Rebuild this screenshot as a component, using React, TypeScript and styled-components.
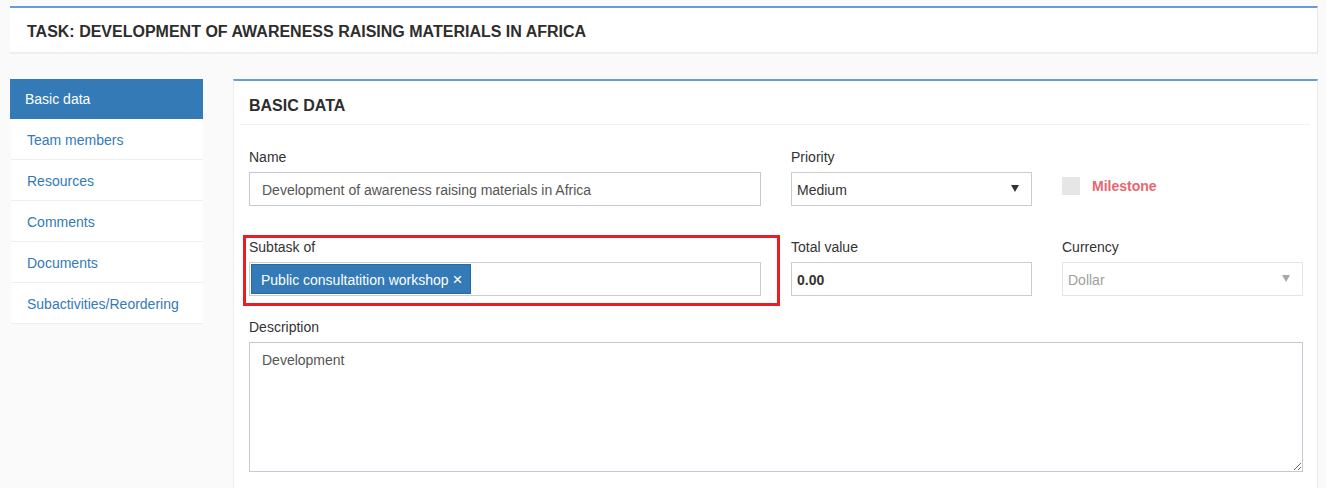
import React from 'react';
import styled, { createGlobalStyle } from 'styled-components';

const GlobalStyle = createGlobalStyle`
  * {
    box-sizing: border-box;
  }
  body {
    margin: 0;
    background: #fafafa;
    font-family: 'Liberation Sans', Arial, sans-serif;
    font-size: 14px;
    color: #333;
  }
`;

const Page = styled.div`
  padding: 6px 8px 0 10px;
`;

const Header = styled.div`
  height: 48px;
  background: #fff;
  border-top: 2px solid #659be0;
  border-right: 1px solid #e6e8eb;
  border-bottom: 2px solid #eceef1;
  display: flex;
  align-items: center;
  padding: 4px 0 0 17px;
`;

const Title = styled.h1`
  margin: 0;
  font-size: 16px;
  font-weight: bold;
  color: #2d2d2d;
`;

const Body = styled.div`
  margin-top: 25px;
  display: flex;
  gap: 30px;
  align-items: flex-start;
`;

const Sidebar = styled.ul`
  width: 193px;
  margin: 0;
  padding: 0;
  list-style: none;
  flex-shrink: 0;
`;

const NavItem = styled.li<{ $active?: boolean }>`
  height: ${({ $active }) => ($active ? '40px' : '41px')};
  display: flex;
  align-items: center;
  padding-left: ${({ $active }) => ($active ? '15px' : '16px')};
  padding-top: ${({ $active }) => ($active ? '0' : '2px')};
  margin-left: ${({ $active }) => ($active ? '0' : '1px')};
  background: ${({ $active }) => ($active ? '#337ab7' : '#fff')};
  color: ${({ $active }) => ($active ? '#fff' : '#337ab7')};
  border-bottom: ${({ $active }) => ($active ? 'none' : '1px solid #eeeeee')};
  font-size: 14px;
`;

const Panel = styled.div`
  flex: 1;
  background: #fff;
  border-top: 2px solid #659be0;
  border-left: 1px solid #ececec;
  border-right: 1px solid #ececec;
  padding: 0 7px 20px 6px;
`;

const PanelHeading = styled.div`
  height: 44px;
  display: flex;
  align-items: center;
  padding: 7px 0 0 9px;
  border-bottom: 1px solid #eef0f3;
`;

const PanelTitle = styled.h2`
  margin: 0;
  font-size: 16px;
  font-weight: bold;
  color: #2d2d2d;
`;

const Form = styled.div`
  padding: 22px 0 0 9px;
  display: grid;
  grid-template-columns: 512px 241px 241px;
  column-gap: 30px;
`;

const Field = styled.div<{ $span?: number; $gap?: number }>`
  position: relative;
  grid-column: span ${({ $span }) => $span || 1};
  margin-bottom: ${({ $gap }) => ($gap ?? 21)}px;
`;

const Label = styled.div`
  height: 20px;
  line-height: 20px;
  margin-bottom: 5px;
  color: #333;
`;

const TextBox = styled.div<{ $bold?: boolean; $border?: string }>`
  height: 34px;
  border: 1px solid ${({ $border }) => $border || '#c2cad8'};
  background: #fff;
  display: flex;
  align-items: center;
  padding: 1px 12px 0;
  color: #555;
  font-weight: ${({ $bold }) => ($bold ? 'bold' : 'normal')};
`;

const NumberBox = styled(TextBox)`
  padding: 1px 5px 0;
  color: #333;
`;

const Select = styled.div<{ $disabled?: boolean }>`
  height: 34px;
  border: 1px solid ${({ $disabled }) => ($disabled ? '#e5e5e5' : '#cccccc')};
  background: #fff;
  display: flex;
  align-items: center;
  justify-content: space-between;
  padding: 1px 12px 0 5px;
  color: ${({ $disabled }) => ($disabled ? '#a0a0a0' : '#333')};
`;

const Caret = styled.span<{ $disabled?: boolean }>`
  width: 0;
  height: 0;
  border-left: 4px solid transparent;
  border-right: 4px solid transparent;
  border-top: 7px solid ${({ $disabled }) => ($disabled ? '#a8a8a8' : '#333')};
  margin-top: -2px;
`;

const MilestoneWrap = styled.div`
  display: flex;
  align-items: center;
  gap: 12px;
  padding-top: 30px;
`;

const CheckBox = styled.span`
  width: 18px;
  height: 18px;
  background: #e6e6e6;
`;

const MilestoneText = styled.span`
  font-weight: bold;
  color: #ea6570;
`;

const TagInput = styled.div`
  height: 34px;
  border: 1px solid #cccccc;
  background: #fff;
  padding: 1px;
  display: flex;
`;

const Tag = styled.span`
  height: 30px;
  background: #337ab7;
  color: #fff;
  display: flex;
  align-items: center;
  padding: 1px 8px 0 9px;
  gap: 4px;
  border: 1px solid #2a6aa3;
`;

const Remove = styled.span`
  font-size: 17px;
  line-height: 1;
`;

const Highlight = styled.div`
  position: absolute;
  top: -2px;
  left: -6px;
  right: -19px;
  bottom: -10px;
  border: 3px solid #ea1c24;
  pointer-events: none;
`;

const TextArea = styled.textarea`
  display: block;
  width: 100%;
  height: 130px;
  border: 1px solid #c2cad8;
  padding: 7px 12px;
  font-family: 'Liberation Sans', Arial, sans-serif;
  font-size: 14px;
  line-height: 20px;
  color: #555;
  resize: vertical;
  outline: none;
`;

const navItems = ['Basic data', 'Team members', 'Resources', 'Comments', 'Documents', 'Subactivities/Reordering'];

const App = () => {
  return (
    <>
      <GlobalStyle />
      <Page>
        <Header>
          <Title>TASK: DEVELOPMENT OF AWARENESS RAISING MATERIALS IN AFRICA</Title>
        </Header>
        <Body>
          <Sidebar>
            {navItems.map((item, i) => (
              <NavItem key={item} $active={i === 0}>
                {item}
              </NavItem>
            ))}
          </Sidebar>
          <Panel>
            <PanelHeading>
              <PanelTitle>BASIC DATA</PanelTitle>
            </PanelHeading>
            <Form>
              <Field $gap={31}>
                <Label>Name</Label>
                <TextBox>Development of awareness raising materials in Africa</TextBox>
              </Field>
              <Field $gap={31}>
                <Label>Priority</Label>
                <Select>
                  <span>Medium</span>
                  <Caret />
                </Select>
              </Field>
              <Field $gap={31}>
                <MilestoneWrap>
                  <CheckBox />
                  <MilestoneText>Milestone</MilestoneText>
                </MilestoneWrap>
              </Field>

              <Field>
                <Label>Subtask of</Label>
                <TagInput>
                  <Tag>
                    Public consultatition workshop <Remove>×</Remove>
                  </Tag>
                </TagInput>
                <Highlight />
              </Field>
              <Field>
                <Label>Total value</Label>
                <NumberBox $bold $border="#cccccc">0.00</NumberBox>
              </Field>
              <Field>
                <Label>Currency</Label>
                <Select $disabled>
                  <span>Dollar</span>
                  <Caret $disabled />
                </Select>
              </Field>

              <Field $span={3} $gap={0}>
                <Label>Description</Label>
                <TextArea readOnly defaultValue="Development" />
              </Field>
            </Form>
          </Panel>
        </Body>
      </Page>
    </>
  );
};

export default App;
